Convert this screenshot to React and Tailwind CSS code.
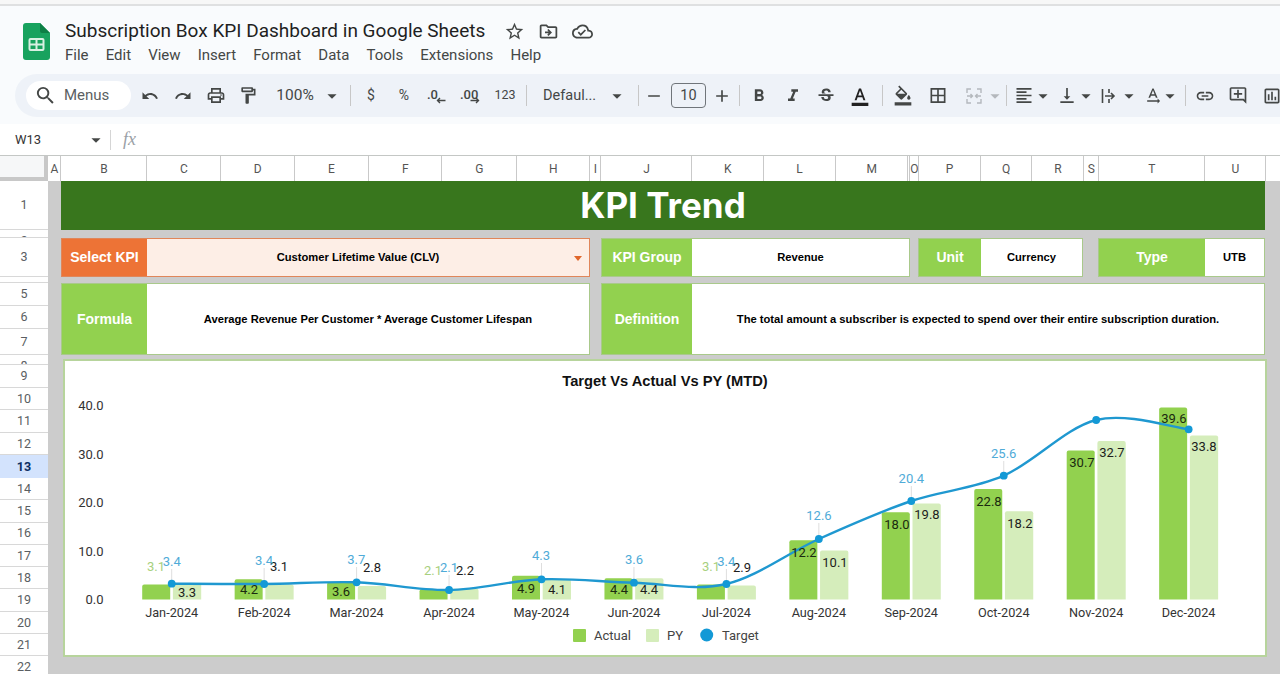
import React from "react";
import {
  MdUndo, MdRedo, MdOutlinePrint, MdOutlineFormatPaint, MdFormatBold, MdFormatItalic, MdStrikethroughS,
  MdFormatColorText, MdFormatColorFill, MdBorderAll, MdFormatAlignLeft, MdVerticalAlignBottom, MdTextRotationNone,
  MdLink, MdOutlineAddComment, MdOutlineInsertChart, MdStarBorder, MdOutlineDriveFileMove, MdOutlineCloudDone,
  MdArrowDropDown, MdSearch, MdRemove, MdAdd,
} from "react-icons/md";

const ICON = "#444746";

function Tool({ className = "", children }) {
  return <div className={"flex w-[20px] shrink-0 items-center justify-center text-[#444746] " + className}>{children}</div>;
}
function Sep({ className = "" }) {
  return <div className={"h-[21px] w-px shrink-0 bg-[#c7c7c7] " + className} />;
}
function Caret({ className = "", color = ICON }) {
  return <Tool className={className}><MdArrowDropDown size={22} color={color} className="shrink-0" /></Tool>;
}

function SheetsLogo() {
  return (
    <svg width="27" height="37" viewBox="0 0 27 37" className="shrink-0">
      <path d="M3 0H17L27 10V34a3 3 0 0 1-3 3H3a3 3 0 0 1-3-3V3a3 3 0 0 1 3-3Z" fill="#18a25e" />
      <path d="M17 0L27 10H19a2 2 0 0 1-2-2Z" fill="#0d7f45" />
      <rect x="6.5" y="16" width="14" height="11" rx="1" fill="none" stroke="#d8f0e2" strokeWidth="2" />
      <path d="M6.5 21.5H20.5M13.5 16V27" stroke="#d8f0e2" strokeWidth="2" />
    </svg>
  );
}

function DecArrow({ dir }) {
  return (
    <svg width="10" height="7" viewBox="0 0 10 7" className={dir === "l" ? "absolute right-[0px] top-[13px]" : "absolute right-[2px] top-[13px]"}>
      {dir === "l"
        ? <path d="M9.5 3.5H1.5M4 1L1.5 3.5L4 6" fill="none" stroke={ICON} strokeWidth="1.4" />
        : <path d="M.5 3.5H8.5M6 1L8.5 3.5L6 6" fill="none" stroke={ICON} strokeWidth="1.4" />}
    </svg>
  );
}

function MergeIcon() {
  return (
    <svg width="18" height="18" viewBox="0 0 18 18" fill="none" stroke="#b4b8bd" strokeWidth="1.4">
      <path d="M2 6V2H6M12 2H16V6M2 12V16H6M12 16H16V12M2 9H7M5.5 7L7.5 9L5.5 11M16 9H11M12.5 7L10.5 9L12.5 11" />
    </svg>
  );
}
function WrapIcon() {
  return (
    <svg width="18" height="18" viewBox="0 0 18 18" fill="none" stroke={ICON} strokeWidth="1.6">
      <path d="M2.5 2V16M9 2V6M9 12V16M5 9H14M11 6L14 9L11 12" />
    </svg>
  );
}

function Toolbar() {
  return (
    <div className="ml-[15px] mt-[-1px] flex h-[43px] items-center overflow-hidden rounded-l-[22px] bg-[#eef2f8] pl-[11px] font-['Roboto',sans-serif] text-[#444746]">
      <div className="flex h-[29px] w-[105px] shrink-0 items-center rounded-full bg-white pl-[8px]">
        <MdSearch size={23} color={ICON} />
        <span className="ml-[7px] text-[15px] text-[#5b5f62]">Menus</span>
      </div>
      <Tool className="ml-[9px]"><MdUndo size={18} /></Tool>
      <Tool className="ml-[13px]"><MdRedo size={18} /></Tool>
      <Tool className="ml-[13px]"><MdOutlinePrint size={21} /></Tool>
      <Tool className="ml-[12px]"><MdOutlineFormatPaint size={21} /></Tool>
      <div className="ml-[17px] w-[40px] shrink-0 text-center text-[15.5px]">100%</div>
      <Caret className="ml-[7px]" />
      <Sep className="ml-[8px]" />
      <Tool className="ml-[10px] text-[14px]">$</Tool>
      <Tool className="ml-[13px] text-[14px]">%</Tool>
      <Tool className="relative ml-[12px] h-[24px]">
        <span className="absolute left-[1px] top-[1px] text-[13px] font-medium">.0</span>
        <DecArrow dir="l" />
      </Tool>
      <Tool className="relative ml-[16px] h-[24px]">
        <span className="absolute left-[-2px] top-[1px] text-[13px] font-medium">.00</span>
        <DecArrow dir="r" />
      </Tool>
      <Tool className="ml-[13px] text-[12.5px]">123</Tool>
      <Sep className="ml-[11px]" />
      <div className="ml-[16px] w-[57px] shrink-0 whitespace-nowrap text-[14.5px]">Defaul...</div>
      <Caret className="ml-[7px]" />
      <Sep className="ml-[11px]" />
      <Tool className="ml-[5px]"><MdRemove size={20} /></Tool>
      <div className="ml-[7px] flex h-[25px] w-[35px] shrink-0 items-center justify-center rounded-[4px] border border-[#70757a] text-[14.5px]">10</div>
      <Tool className="ml-[6px]"><MdAdd size={20} /></Tool>
      <Sep className="ml-[7px]" />
      <Tool className="ml-[9px]"><MdFormatBold size={22} /></Tool>
      <Tool className="ml-[14px]"><MdFormatItalic size={22} /></Tool>
      <Tool className="ml-[13px]"><MdStrikethroughS size={20} /></Tool>
      <Tool className="ml-[14px]"><MdFormatColorText size={22} color="#222" /></Tool>
      <Sep className="ml-[12px]" />
      <Tool className="ml-[10px]"><MdFormatColorFill size={23} /></Tool>
      <Tool className="ml-[15px]"><MdBorderAll size={21} /></Tool>
      <Tool className="ml-[16px]"><MergeIcon /></Tool>
      <Caret className="ml-[1px]" color="#b4b8bd" />
      <Sep className="ml-[1px]" />
      <Tool className="ml-[7px]"><MdFormatAlignLeft size={21} /></Tool>
      <Caret className="ml-[-1px]" />
      <Tool className="ml-[4px]"><MdVerticalAlignBottom size={21} /></Tool>
      <Caret className="ml-[-1px]" />
      <Tool className="ml-[3px]"><WrapIcon /></Tool>
      <Caret />
      <Tool className="ml-[4px]"><MdTextRotationNone size={20} /></Tool>
      <Caret className="ml-[-3px]" />
      <Sep className="ml-[5px]" />
      <Tool className="ml-[9px]"><MdLink size={22} /></Tool>
      <Tool className="ml-[13px]"><MdOutlineAddComment size={21} /></Tool>
      <Tool className="ml-[14px]"><MdOutlineInsertChart size={22} /></Tool>
    </div>
  );
}

const MENUS = ["File", "Edit", "View", "Insert", "Format", "Data", "Tools", "Extensions", "Help"];

function Header() {
  return (
    <header className="h-[118px] bg-[#f9fbfd] font-['Roboto',sans-serif]">
      <div className="flex h-[69px] pl-[23px] pt-[11px]">
        <div className="pt-[6px]"><SheetsLogo /></div>
        <div className="ml-[15px] flex flex-col">
          <div className="flex h-[28px] items-center">
            <span className="whitespace-nowrap text-[19px] text-[#1f1f1f]">Subscription Box KPI Dashboard in Google Sheets</span>
            <div className="ml-[19px] flex items-center gap-[13px] text-[#444746]">
              <MdStarBorder size={21} />
              <MdOutlineDriveFileMove size={21} />
              <MdOutlineCloudDone size={21} />
            </div>
          </div>
          <nav className="flex h-[20px] items-center gap-[17.1px] text-[15px] text-[#444746]">
            {MENUS.map((m) => <span key={m}>{m}</span>)}
          </nav>
        </div>
      </div>
      <Toolbar />
    </header>
  );
}

function FormulaBar() {
  return (
    <div className="flex h-[31px] items-center bg-white font-['Roboto',sans-serif] text-[#444746]">
      <span className="ml-[15px] w-[70px] text-[13px] text-[#333]">W13</span>
      <MdArrowDropDown size={22} className="shrink-0" />
      <div className="ml-[3px] h-[20px] w-px bg-[#d5d5d5]" />
      <span className="ml-[12px] font-['Liberation_Serif',serif] text-[18px] italic text-[#9aa0a6]">fx</span>
    </div>
  );
}

const COLS = [
  ["A", "w-[13px]"], ["B", "w-[86px]"], ["C", "w-[74px]"], ["D", "w-[73.5px]"], ["E", "w-[74px]"], ["F", "w-[73.5px]"],
  ["G", "w-[74.5px]"], ["H", "w-[73.5px]"], ["I", "w-[11px]"], ["J", "w-[91px]"], ["K", "w-[71.5px]"], ["L", "w-[72px]"],
  ["M", "w-[72.5px]"], ["", "w-[2px]"], ["O", "w-[8.5px]"], ["P", "w-[62px]"], ["Q", "w-[51.5px]"], ["R", "w-[52px]"],
  ["S", "w-[14.5px]"], ["T", "w-[106.5px]"], ["U", "w-[61px]"],
];

function ColumnHeaders() {
  return (
    <div className="flex h-[26px] border-t border-[#c4c7c5] bg-white font-['Roboto',sans-serif] text-[12px] text-[#555]">
      <div className="h-[25px] w-[48px] shrink-0 border-b-4 border-r-4 border-[#c8c8c8] bg-[#f6f7f8]" />
      {COLS.map(([c, w], i) => (
        <div key={i} className={"flex h-[25px] shrink-0 items-center justify-center overflow-hidden border-r border-[#c9c9c9] pl-px " + w}>{c}</div>
      ))}
    </div>
  );
}

const ROW_CELL = "flex w-full items-center justify-center overflow-hidden border-b border-[#d8d8d8] bg-white pt-px";

function RowHeaders() {
  const small = (n, h) => (
    <div key={n} className={"flex w-full items-start justify-center overflow-hidden border-b border-[#d8d8d8] bg-white pt-[3px] leading-[16px] " + h}>{n}</div>
  );
  const full = [];
  for (let n = 9; n <= 22; n++) {
    const h = n <= 13 ? " h-[22.6px] shrink-0" : " h-[22.3px] shrink-0";
    full.push(
      n === 13
        ? <div key={n} className={"flex w-full items-center justify-center bg-[#d3e3fd] pt-px font-bold text-[#0b2e63]" + h}>{n}</div>
        : <div key={n} className={ROW_CELL + h}>{n}</div>
    );
  }
  return (
    <div className="flex w-[48px] shrink-0 flex-col font-['Roboto',sans-serif] text-[12.5px] text-[#5a5e62]">
      <div className={ROW_CELL + " h-[49px] shrink-0"}>1</div>
      {small(2, "h-[8px] shrink-0")}
      <div className={ROW_CELL + " h-[39px] shrink-0"}>3</div>
      {small(4, "h-[6px] shrink-0")}
      <div className={ROW_CELL + " h-[23px] shrink-0"}>5</div>
      <div className={ROW_CELL + " h-[23px] shrink-0"}>6</div>
      <div className={ROW_CELL + " h-[26px] shrink-0"}>7</div>
      {small(8, "h-[10px] shrink-0")}
      {full}
    </div>
  );
}

const LABEL = "flex shrink-0 items-center justify-center bg-[#92d14f] text-[14px] font-bold text-white";
const VALUE = "flex shrink-0 items-center justify-center bg-white text-[11.2px] font-bold text-black";

function Tiles() {
  return (
    <>
      <div className="mt-[8px] flex h-[39px]">
        <div className="flex w-[529px] shrink-0 border border-[#e0865a]">
          <div className="flex w-[85px] shrink-0 items-center justify-center bg-[#ed7336] text-[14px] font-bold text-white">Select KPI</div>
          <div className="relative flex flex-1 items-center justify-center bg-[#fdeee6] text-[11.2px] font-bold text-black">
            <span className="mr-[20px]">Customer Lifetime Value (CLV)</span>
            <span className="absolute right-[7px] top-[17px] h-0 w-0 border-x-[4px] border-t-[5px] border-x-transparent border-t-[#e0662a]" />
          </div>
        </div>
        <div className="ml-[11px] flex w-[309px] shrink-0 border border-[#a9c98b]">
          <div className={LABEL + " w-[90px]"}>KPI Group</div>
          <div className={VALUE + " flex-1"}>Revenue</div>
        </div>
        <div className="ml-[8px] flex w-[165px] shrink-0 border border-[#a9c98b]">
          <div className={LABEL + " w-[62px]"}>Unit</div>
          <div className={VALUE + " flex-1"}>Currency</div>
        </div>
        <div className="ml-[15px] flex w-[167px] shrink-0 border border-[#a9c98b]">
          <div className={LABEL + " w-[106px]"}>Type</div>
          <div className={VALUE + " flex-1"}>UTB</div>
        </div>
      </div>
      <div className="mt-[6px] flex h-[72px]">
        <div className="flex w-[529px] shrink-0 border border-[#a9c98b]">
          <div className={LABEL + " w-[85px]"}>Formula</div>
          <div className={VALUE + " flex-1"}>Average Revenue Per Customer * Average Customer Lifespan</div>
        </div>
        <div className="ml-[11px] flex w-[664px] shrink-0 border border-[#a9c98b]">
          <div className={LABEL + " w-[90px]"}>Definition</div>
          <div className={VALUE + " flex-1"}>The total amount a subscriber is expected to spend over their entire subscription duration.</div>
        </div>
      </div>
    </>
  );
}

const BASE = 599.5;
const SCALE = 4.85;
const C0 = 171.7;
const STEP = 92.45;
const MONTHS = ["Jan", "Feb", "Mar", "Apr", "May", "Jun", "Jul", "Aug", "Sep", "Oct", "Nov", "Dec"];
const ACTUAL = [3.1, 4.2, 3.6, 2.1, 4.9, 4.4, 3.1, 12.2, 18.0, 22.8, 30.7, 39.6];
const PY = [3.3, 3.1, 2.8, 2.2, 4.1, 4.4, 2.9, 10.1, 19.8, 18.2, 32.7, 33.8];
const TARGET_Y = [583.7, 584, 582.3, 590, 579.3, 582.7, 584, 539, 501, 475.7, 420, 429.3];

// [text, x, y] centre of each data label as it sits in the chart
const ACTUAL_LABELS = [
  ["3.1", 156, 566, 1], ["4.2", 249, 589, 0], ["3.6", 341, 591, 0], ["2.1", 433, 570, 1], ["4.9", 526, 588, 0], ["4.4", 619, 589, 0],
  ["3.1", 711, 566, 1], ["12.2", 804, 552, 0], ["18.0", 897, 524, 0], ["22.8", 989, 501, 0], ["30.7", 1082, 462, 0], ["39.6", 1174, 418, 0],
];
const PY_LABELS = [
  ["3.3", 187, 592], ["3.1", 279, 566], ["2.8", 372, 567], ["2.2", 465, 570], ["4.1", 557, 589], ["4.4", 649, 589],
  ["2.9", 742, 567], ["10.1", 835, 562], ["19.8", 927, 514], ["18.2", 1020, 523], ["32.7", 1112, 452], ["33.8", 1204, 446],
];
const TARGET_LABELS = [
  ["3.4", 171.7, 561], ["3.4", 264, 560], ["3.7", 356.3, 559], ["2.1", 449, 567], ["4.3", 541, 555], ["3.6", 634, 559],
  ["3.4", 726.3, 561], ["12.6", 819, 515], ["20.4", 911.3, 478], ["25.6", 1003.7, 453],
];

function topBar(x, w, v) {
  const y = BASE - v * SCALE;
  const r = 2;
  return `M${x} ${BASE}V${y + r}Q${x} ${y} ${x + r} ${y}H${x + w - r}Q${x + w} ${y} ${x + w} ${y + r}V${BASE}Z`;
}

function splinePath(pts) {
  let d = `M${pts[0][0]} ${pts[0][1]}`;
  for (let i = 0; i < pts.length - 1; i++) {
    const p0 = pts[Math.max(0, i - 1)];
    const p1 = pts[i];
    const p2 = pts[i + 1];
    const p3 = pts[Math.min(pts.length - 1, i + 2)];
    const c1 = [p1[0] + (p2[0] - p0[0]) / 6, p1[1] + (p2[1] - p0[1]) / 6];
    const c2 = [p2[0] - (p3[0] - p1[0]) / 6, p2[1] - (p3[1] - p1[1]) / 6];
    d += `C${c1[0]} ${c1[1]} ${c2[0]} ${c2[1]} ${p2[0]} ${p2[1]}`;
  }
  return d;
}

function Chart() {
  const centers = MONTHS.map((_, i) => C0 + i * STEP);
  const pts = centers.map((c, i) => [c, TARGET_Y[i]]);
  const font = "Roboto, sans-serif";
  return (
    <svg width="1200" height="294" viewBox="65 361 1200 294" className="block" fontFamily={font} fontSize="13">
      <text x="665" y="386" textAnchor="middle" fontFamily="'Liberation Sans', sans-serif" fontWeight="700" fontSize="14.7" fill="#111">Target Vs Actual Vs PY (MTD)</text>
      {[["40.0", 405], ["30.0", 454], ["20.0", 502.5], ["10.0", 551], ["0.0", 599.5]].map(([t, y]) => (
        <text key={t} x="103.5" y={y + 4.5} textAnchor="end" fill="#333">{t}</text>
      ))}
      {centers.map((c, i) => (
        <g key={i}>
          <path d={topBar(c - 29.5, 28, ACTUAL[i])} fill="#92d14f" />
          <path d={topBar(c + 1.2, 28.3, PY[i])} fill="#d5edbb" />
          <text x={c} y="617" textAnchor="middle" fill="#333" fontSize="12.7">{MONTHS[i] + "-2024"}</text>
        </g>
      ))}
      {TARGET_LABELS.map(([t, x, y], i) => (
        <line key={i} x1={centers[i]} x2={centers[i]} y1={y + 8} y2={TARGET_Y[i]} stroke="#dedede" strokeWidth="1" />
      ))}
      <path d={splinePath(pts)} fill="none" stroke="#1f98d0" strokeWidth="2.4" />
      {pts.map(([x, y], i) => <circle key={i} cx={x} cy={y} r="3.9" fill="#1399d6" />)}
      {ACTUAL_LABELS.map(([t, x, y, light], i) => (
        <text key={i} x={x} y={y + 4.6} textAnchor="middle" fill={light ? "#a7d07e" : "#1a2a10"}>{t}</text>
      ))}
      {PY_LABELS.map(([t, x, y], i) => (
        <text key={i} x={x} y={y + 4.6} textAnchor="middle" fill="#1d1d1d">{t}</text>
      ))}
      {TARGET_LABELS.map(([t, x, y], i) => (
        <text key={i} x={x} y={y + 4.6} textAnchor="middle" fill="#4fabd8">{t}</text>
      ))}
      <rect x="573" y="629" width="13" height="13" rx="1" fill="#92d14f" />
      <text x="594" y="639.5" fill="#444">Actual</text>
      <rect x="646" y="629" width="13" height="13" rx="1" fill="#d5edbb" />
      <text x="667" y="639.5" fill="#444">PY</text>
      <circle cx="706.7" cy="635" r="6.5" fill="#1399d6" />
      <text x="722" y="639.5" fill="#444">Target</text>
    </svg>
  );
}

export default function App() {
  return (
    <div className="h-[674px] w-[1280px] overflow-hidden bg-white">
      <div className="h-[6px] border-b-2 border-[#dfe0e1] bg-[#f7f7f7]" />
      <Header />
      <FormulaBar />
      <ColumnHeaders />
      <div className="flex">
        <RowHeaders />
        <main className="min-w-0 flex-1 bg-[#cccccc] pl-[13px] font-['Liberation_Sans',sans-serif]">
          <div className="flex h-[49px] w-[1204px] items-center justify-center bg-[#38761d] font-['Inter',sans-serif] text-[35px] font-bold text-white">KPI Trend</div>
          <Tiles />
          <div className="ml-[2px] mt-[4px] h-[298px] w-[1204px] border-2 border-[#b7d49c] bg-white">
            <Chart />
          </div>
          <div className="h-[30px]" />
        </main>
      </div>
    </div>
  );
}
